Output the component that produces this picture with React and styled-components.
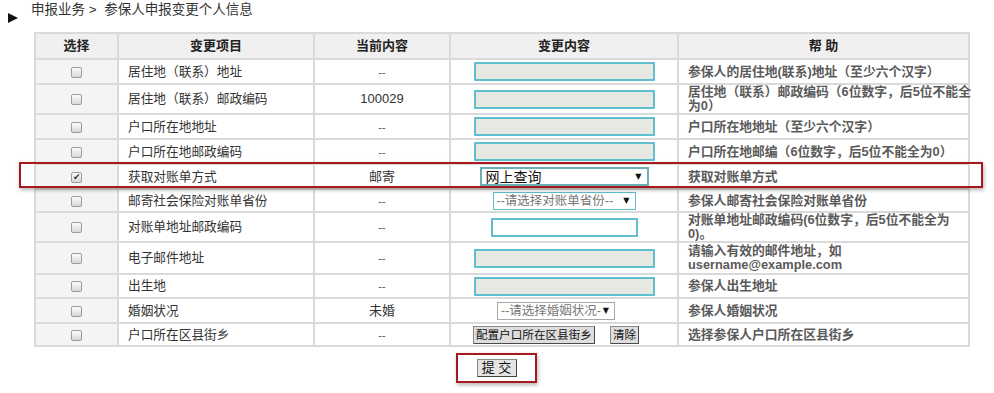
import React from "react";
import styled, { createGlobalStyle } from "styled-components";

const GlobalStyle = createGlobalStyle`
  html, body {
    margin: 0;
    padding: 0;
    background: #ffffff;
  }
  body {
    font-family: "Liberation Sans", "Noto Sans CJK SC", sans-serif;
    color: #333333;
  }
`;

const rows = [
  { item: "居住地（联系）地址", current: "--", edit: { type: "input", filled: true, width: 181 }, help: ["参保人的居住地(联系)地址（至少六个汉字）"], h: 25 },
  { item: "居住地（联系）邮政编码", current: "100029", edit: { type: "input", filled: true, width: 181 }, help: ["居住地（联系）邮政编码（6位数字，后5位不能全", "为0）"], h: 30 },
  { item: "户口所在地地址", current: "--", edit: { type: "input", filled: true, width: 181 }, help: ["户口所在地地址（至少六个汉字）"], h: 25 },
  { item: "户口所在地邮政编码", current: "--", edit: { type: "input", filled: true, width: 181 }, help: ["户口所在地邮编（6位数字，后5位不能全为0）"], h: 25 },
  { item: "获取对账单方式", current: "邮寄", checked: true, edit: { type: "select", text: "网上查询", width: 169, dark: true }, help: ["获取对账单方式"], h: 25 },
  { item: "邮寄社会保险对账单省份", current: "--", edit: { type: "select", text: "--请选择对账单省份--", width: 143 }, help: ["参保人邮寄社会保险对账单省份"], h: 23 },
  { item: "对账单地址邮政编码", current: "--", edit: { type: "input", filled: false, width: 147 }, help: ["对账单地址邮政编码(6位数字，后5位不能全为", "0)。"], h: 29 },
  { item: "电子邮件地址", current: "--", edit: { type: "input", filled: true, width: 181 }, help: ["请输入有效的邮件地址，如", "username@example.com"], h: 32 },
  { item: "出生地", current: "--", edit: { type: "input", filled: true, width: 181 }, help: ["参保人出生地址"], h: 24 },
  { item: "婚姻状况", current: "未婚", edit: { type: "select", text: "--请选择婚姻状况-", width: 118, plain: true }, help: ["参保人婚姻状况"], h: 25 },
  { item: "户口所在区县街乡", current: "--", edit: { type: "buttons" }, help: ["选择参保人户口所在区县街乡"], h: 23 },
];

export default function App() {
  return (
    <>
      <GlobalStyle />
      <Page>
        <Breadcrumb>
          <Arrow />
          <Crumbs>申报业务 &gt;&nbsp; 参保人申报变更个人信息</Crumbs>
        </Breadcrumb>
        <TableWrap>
          <Table>
            <colgroup>
              <col style={{ width: 83 }} />
              <col style={{ width: 196 }} />
              <col style={{ width: 136 }} />
              <col style={{ width: 228 }} />
              <col style={{ width: 291 }} />
            </colgroup>
            <thead>
              <tr>
                <HeadCell>选择</HeadCell>
                <HeadCell>变更项目</HeadCell>
                <HeadCell>当前内容</HeadCell>
                <HeadCell>变更内容</HeadCell>
                <HeadCell>帮 助</HeadCell>
              </tr>
            </thead>
            <tbody>
              {rows.map((r) => (
                <Row key={r.item} $h={r.h}>
                  <CheckCell>
                    <CheckBox $checked={r.checked} />
                  </CheckCell>
                  <ItemCell>{r.item}</ItemCell>
                  <CurrentCell $dash={r.current === "--"}>{r.current}</CurrentCell>
                  <EditCell>
                    <Editor edit={r.edit} />
                  </EditCell>
                  <HelpCell>
                    {r.help.map((line) => (
                      <HelpLine key={line}>{line}</HelpLine>
                    ))}
                  </HelpCell>
                </Row>
              ))}
            </tbody>
          </Table>
          <Highlight />
        </TableWrap>
        <SubmitRow>
          <SubmitFrame>
            <SubmitButton>提 交</SubmitButton>
          </SubmitFrame>
        </SubmitRow>
      </Page>
    </>
  );
}

function Editor({ edit }) {
  if (edit.type === "input") {
    return <TextBox $w={edit.width} $filled={edit.filled} />;
  }
  if (edit.type === "select") {
    return (
      <SelectBox $w={edit.width} $dark={edit.dark} $plain={edit.plain}>
        <span>{edit.text}</span>
        <Caret>▼</Caret>
      </SelectBox>
    );
  }
  return (
    <ButtonGroup>
      <GrayButton>配置户口所在区县街乡</GrayButton>
      <GrayButton>清除</GrayButton>
    </ButtonGroup>
  );
}

const Page = styled.div`
  width: 994px;
  height: 393px;
  overflow: hidden;
`;

const Breadcrumb = styled.div`
  height: 32px;
  display: flex;
  align-items: flex-start;
  padding-left: 8px;
  box-sizing: border-box;
`;

const Arrow = styled.span`
  margin-top: 13px;
  width: 0;
  height: 0;
  border-left: 10px solid #111111;
  border-top: 5px solid transparent;
  border-bottom: 5px solid transparent;
`;

const Crumbs = styled.span`
  margin-left: 13px;
  padding-top: 1px;
  font-size: 13.5px;
  line-height: 18px;
  color: #333333;
`;

const TableWrap = styled.div`
  position: relative;
  margin-left: 34px;
  width: 934px;
`;

const Table = styled.table`
  width: 934px;
  table-layout: fixed;
  border-collapse: collapse;
  border: 1px solid #c8c8c8;
`;

const HeadCell = styled.th`
  height: 24px;
  padding: 0;
  background: #f0f0f0;
  border: 2px solid #dadada;
  font-size: 13px;
  font-weight: bold;
  color: #222222;
  text-align: center;
  line-height: 16px;
`;

const Row = styled.tr`
  height: ${(p) => p.$h}px;
  & > td {
    border: 2px solid #dadada;
    padding: 0;
    vertical-align: middle;
  }
`;

const CheckCell = styled.td`
  background: #f4f4f4;
  text-align: center;
`;

const CheckBox = styled.span`
  display: inline-block;
  position: relative;
  width: 11px;
  height: 11px;
  box-sizing: border-box;
  border: 1px solid #9c9c9c;
  border-radius: 2px;
  background: linear-gradient(#fbfbfb, #d8d8d8);
  vertical-align: middle;
  &::after {
    content: ${(p) => (p.$checked ? '"✔"' : '""')};
    position: absolute;
    left: 1px;
    top: -2px;
    font-family: "DejaVu Sans", sans-serif;
    font-size: 9px;
    line-height: 12px;
    color: #333333;
  }
`;

const ItemCell = styled.td`
  padding-left: 9px !important;
  font-size: 12.7px;
  line-height: 16px;
  color: #333333;
  text-align: left;
  white-space: nowrap;
`;

const CurrentCell = styled.td`
  text-align: center;
  font-size: ${(p) => (p.$dash ? "11px" : "13px")};
  line-height: 16px;
  color: ${(p) => (p.$dash ? "#555555" : "#333333")};
`;

const EditCell = styled.td`
  text-align: center;
`;

const HelpCell = styled.td`
  padding-left: 9px !important;
  text-align: left;
  font-size: 12.8px;
  font-weight: bold;
  color: #5a5a5a;
  line-height: 14px;
`;

const HelpLine = styled.div`
  white-space: nowrap;
`;

const TextBox = styled.div`
  display: inline-block;
  vertical-align: middle;
  width: ${(p) => p.$w}px;
  height: 19px;
  box-sizing: border-box;
  border: 2px solid #5fbfcf;
  border-radius: 1px;
  background: ${(p) => (p.$filled ? "#e8e8e2" : "#ffffff")};
`;

const SelectBox = styled.div`
  display: inline-flex;
  vertical-align: middle;
  align-items: center;
  justify-content: space-between;
  width: ${(p) => p.$w}px;
  height: ${(p) => (p.$dark ? 19 : 18)}px;
  box-sizing: border-box;
  margin-right: ${(p) => (p.$plain ? 16 : 0)}px;
  padding: 0 5px 0 ${(p) => (p.$dark ? 4 : 3)}px;
  border: ${(p) => (p.$plain ? "1px solid #a8a8a8" : p.$dark ? "2px solid #6ab0b4" : "1px solid #5fbfcf")};
  background: #ffffff;
  font-size: ${(p) => (p.$dark ? 14 : 12.5)}px;
  line-height: 16px;
  color: ${(p) => (p.$dark ? "#111111" : "#777777")};
  white-space: nowrap;
  text-align: left;
`;

const Caret = styled.span`
  font-family: "DejaVu Sans", sans-serif;
  font-size: 8px;
  color: #111111;
`;

const ButtonGroup = styled.div`
  display: inline-flex;
  align-items: center;
  gap: 15px;
  margin-right: 16px;
  vertical-align: middle;
`;

const GrayButton = styled.span`
  display: inline-block;
  height: 18px;
  box-sizing: border-box;
  padding: 0 2px;
  border: 1px solid #4a4a4a;
  border-top-color: #8a8a8a;
  border-left-color: #8a8a8a;
  background: #dedede;
  font-size: 11.6px;
  line-height: 16px;
  color: #111111;
`;

const Highlight = styled.div`
  position: absolute;
  top: 130px;
  left: -15px;
  width: 964px;
  height: 26px;
  box-sizing: border-box;
  border: 2px solid #a8181c;
  box-shadow: 1px 2px 4px rgba(0, 0, 0, 0.3);
  pointer-events: none;
`;

const SubmitRow = styled.div`
  width: 934px;
  margin-left: 34px;
  padding: 6px 9px 0 0;
  box-sizing: border-box;
  display: flex;
  justify-content: center;
`;

const SubmitFrame = styled.div`
  width: 81px;
  height: 30px;
  box-sizing: border-box;
  border: 2px solid #a8181c;
  box-shadow: 1px 2px 4px rgba(0, 0, 0, 0.3);
  display: flex;
  align-items: center;
  justify-content: center;
`;

const SubmitButton = styled.span`
  width: 40px;
  height: 18px;
  box-sizing: border-box;
  border: 1px solid #444444;
  border-top-color: #888888;
  border-left-color: #888888;
  background: #e4e4e4;
  font-size: 13px;
  line-height: 16px;
  text-align: center;
  color: #111111;
`;
